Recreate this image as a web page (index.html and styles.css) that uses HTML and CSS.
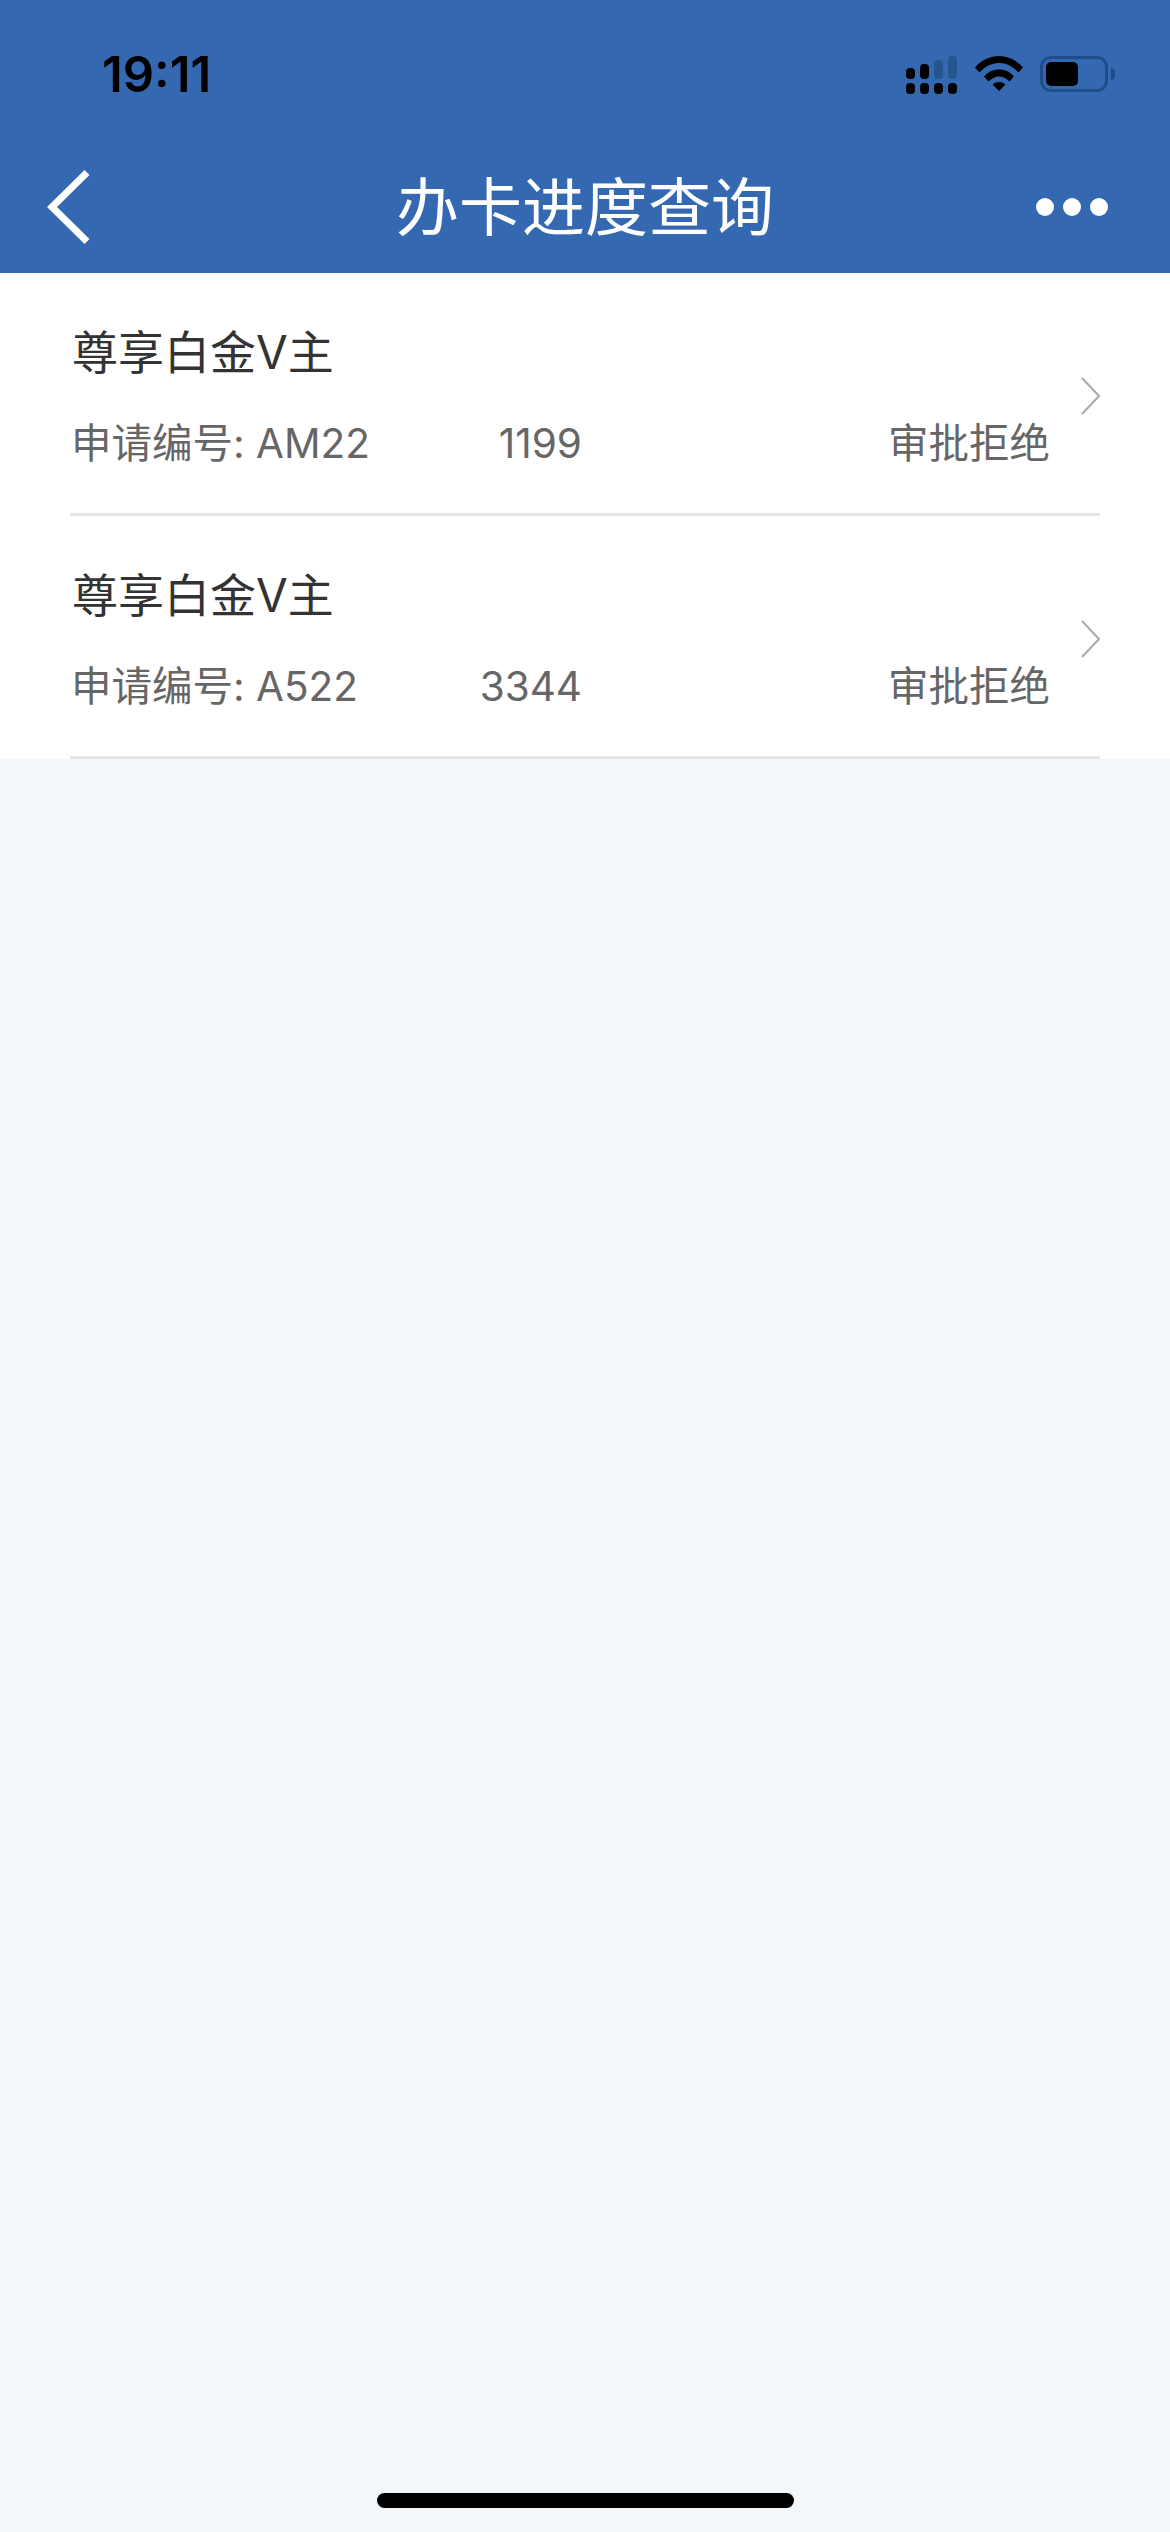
FILE: index.html
```html
<!DOCTYPE html>
<html lang="zh-CN">
<head>
    <meta charset="UTF-8">
    <meta name="viewport" content="width=device-width, initial-scale=1.0">
    <title>办卡进度查询</title>
    <link rel="stylesheet" href="styles.css">
</head>
<body>
    <div class="top">
        <div class="status-bar">
            <span class="time">19:11</span>
            <div class="status-icons">
                <svg class="signal" width="52" height="38" viewBox="0 0 52 38">
                    <rect x="0" y="12" width="9" height="11" rx="4" fill="#000"/>
                    <rect x="14" y="8" width="9" height="15" rx="4" fill="#000"/>
                    <rect x="28" y="4" width="9" height="19" rx="4" fill="#25558f"/>
                    <rect x="42" y="0" width="9" height="23" rx="4" fill="#25558f"/>
                    <rect x="0" y="27" width="9" height="11" rx="4" fill="#000"/>
                    <rect x="14" y="27" width="9" height="11" rx="4" fill="#000"/>
                    <rect x="28" y="27" width="9" height="11" rx="4" fill="#000"/>
                    <rect x="42" y="27" width="9" height="11" rx="4" fill="#000"/>
                </svg>
                <svg class="wifi" width="48" height="36" viewBox="0 0 48 36">
                    <path d="M0 12.500C6.500 5 14.800 1 24 1s17.500 4 24 11.500l-4.500 5C38 11.500 31.500 8 24 8S10 11.500 4.500 17.500z" fill="#000"/>
                    <path d="M9 21.500C13 17 18 14.500 24 14.500s11 2.500 15 7l-4.500 5C31.500 23.500 28 21.500 24 21.500s-7.500 2-10.500 5z" fill="#000"/>
                    <path d="M17.500 29.500C19.500 27.800 21.500 27 24 27s4.500.8 6.500 2.500L24 36z" fill="#000"/>
                </svg>
                <div class="battery">
                    <div class="battery-level"></div>
                </div>
            </div>
        </div>
        <div class="nav-bar">
            <svg class="back" width="44" height="74" viewBox="0 0 44 74">
                <path d="M41 2.500L6 37l35 34.500" fill="none" stroke="#fff" stroke-width="7"/>
            </svg>
            <h1 class="nav-title">办卡进度查询</h1>
            <div class="more">
                <span></span><span></span><span></span>
            </div>
        </div>
    </div>

    <div class="list">
        <div class="item">
            <div class="item-info">
                <div class="item-name">尊享白金V主</div>
                <div class="item-detail">
                    <div class="apply-no">
                        <span>申请编号: AM22</span>
                        <span>1199</span>
                    </div>
                    <span class="item-state">审批拒绝</span>
                </div>
            </div>
            <svg class="arrow" width="19" height="38" viewBox="0 0 19 38">
                <path d="M1 1l17 18L1 37" fill="none" stroke="#aaa" stroke-width="2"/>
            </svg>
        </div>
        <div class="item">
            <div class="item-info">
                <div class="item-name">尊享白金V主</div>
                <div class="item-detail">
                    <div class="apply-no">
                        <span>申请编号: A522</span>
                        <span>3344</span>
                    </div>
                    <span class="item-state">审批拒绝</span>
                </div>
            </div>
            <svg class="arrow" width="19" height="38" viewBox="0 0 19 38">
                <path d="M1 1l17 18L1 37" fill="none" stroke="#aaa" stroke-width="2"/>
            </svg>
        </div>
    </div>

    <div class="home-bar"></div>
</body>
</html>
```

FILE: styles.css
```css
* {
    box-sizing: border-box;
    margin: 0;
    padding: 0;
}

body {
    width: 1170px;
    height: 2532px;
    overflow: hidden;
    position: relative;
    background: #f3f7fa;
    font-family: "Inter", "Noto Sans CJK SC", sans-serif;
}

.top {
    height: 273px;
    background: #3469b1;
}

.status-bar {
    height: 150px;
    display: flex;
    justify-content: space-between;
    padding: 56px 62px 0 102px;
}

.time {
    font-size: 49px;
    line-height: 38px;
    height: 38px;
    font-weight: 600;
    color: #000;
}

.status-icons {
    display: flex;
    align-items: flex-start;
    gap: 17px;
}

.wifi {
    margin-top: -1px;
}

.battery {
    position: relative;
    width: 68px;
    height: 36px;
    border: 3px solid #1f4d8a;
    border-radius: 11px;
    padding: 3px;
}

.battery::after {
    content: "";
    position: absolute;
    right: -10px;
    top: 9px;
    width: 4px;
    height: 12px;
    border-radius: 0 6px 6px 0;
    background: #1f4d8a;
}

.battery-level {
    width: 32px;
    height: 24px;
    border-radius: 5px;
    background: #000;
}

.nav-bar {
    height: 123px;
    display: flex;
    align-items: flex-start;
    justify-content: space-between;
    padding: 20px 62px 0 46px;
    position: relative;
}

.nav-title {
    position: absolute;
    left: 0;
    right: 0;
    top: 21px;
    text-align: center;
    font-size: 63px;
    line-height: 72px;
    font-weight: 400;
    color: #fff;
}

.more {
    display: flex;
    gap: 9px;
    padding-top: 28px;
}

.more span {
    width: 18px;
    height: 18px;
    border-radius: 50%;
    background: #fff;
}

.list {
    background: #fff;
}

.item {
    height: 243px;
    margin: 0 70px;
    padding-top: 47px;
    display: flex;
    justify-content: space-between;
    border-bottom: 3px solid #e5e5e5;
}

.item-info {
    width: 980px;
    padding-left: 2px;
}

.item-name {
    font-size: 46px;
    line-height: 64px;
    color: #333;
}

.item-detail {
    display: flex;
    justify-content: space-between;
    margin-top: 32px;
    margin-left: -1px;
    font-size: 40.5px;
    line-height: 56px;
    color: #666;
}

.apply-no {
    width: 511px;
    display: flex;
    justify-content: space-between;
}

.arrow {
    margin-top: 57px;
}

.home-bar {
    position: absolute;
    left: 377px;
    bottom: 24px;
    width: 417px;
    height: 15px;
    border-radius: 8px;
    background: #000;
}
```
